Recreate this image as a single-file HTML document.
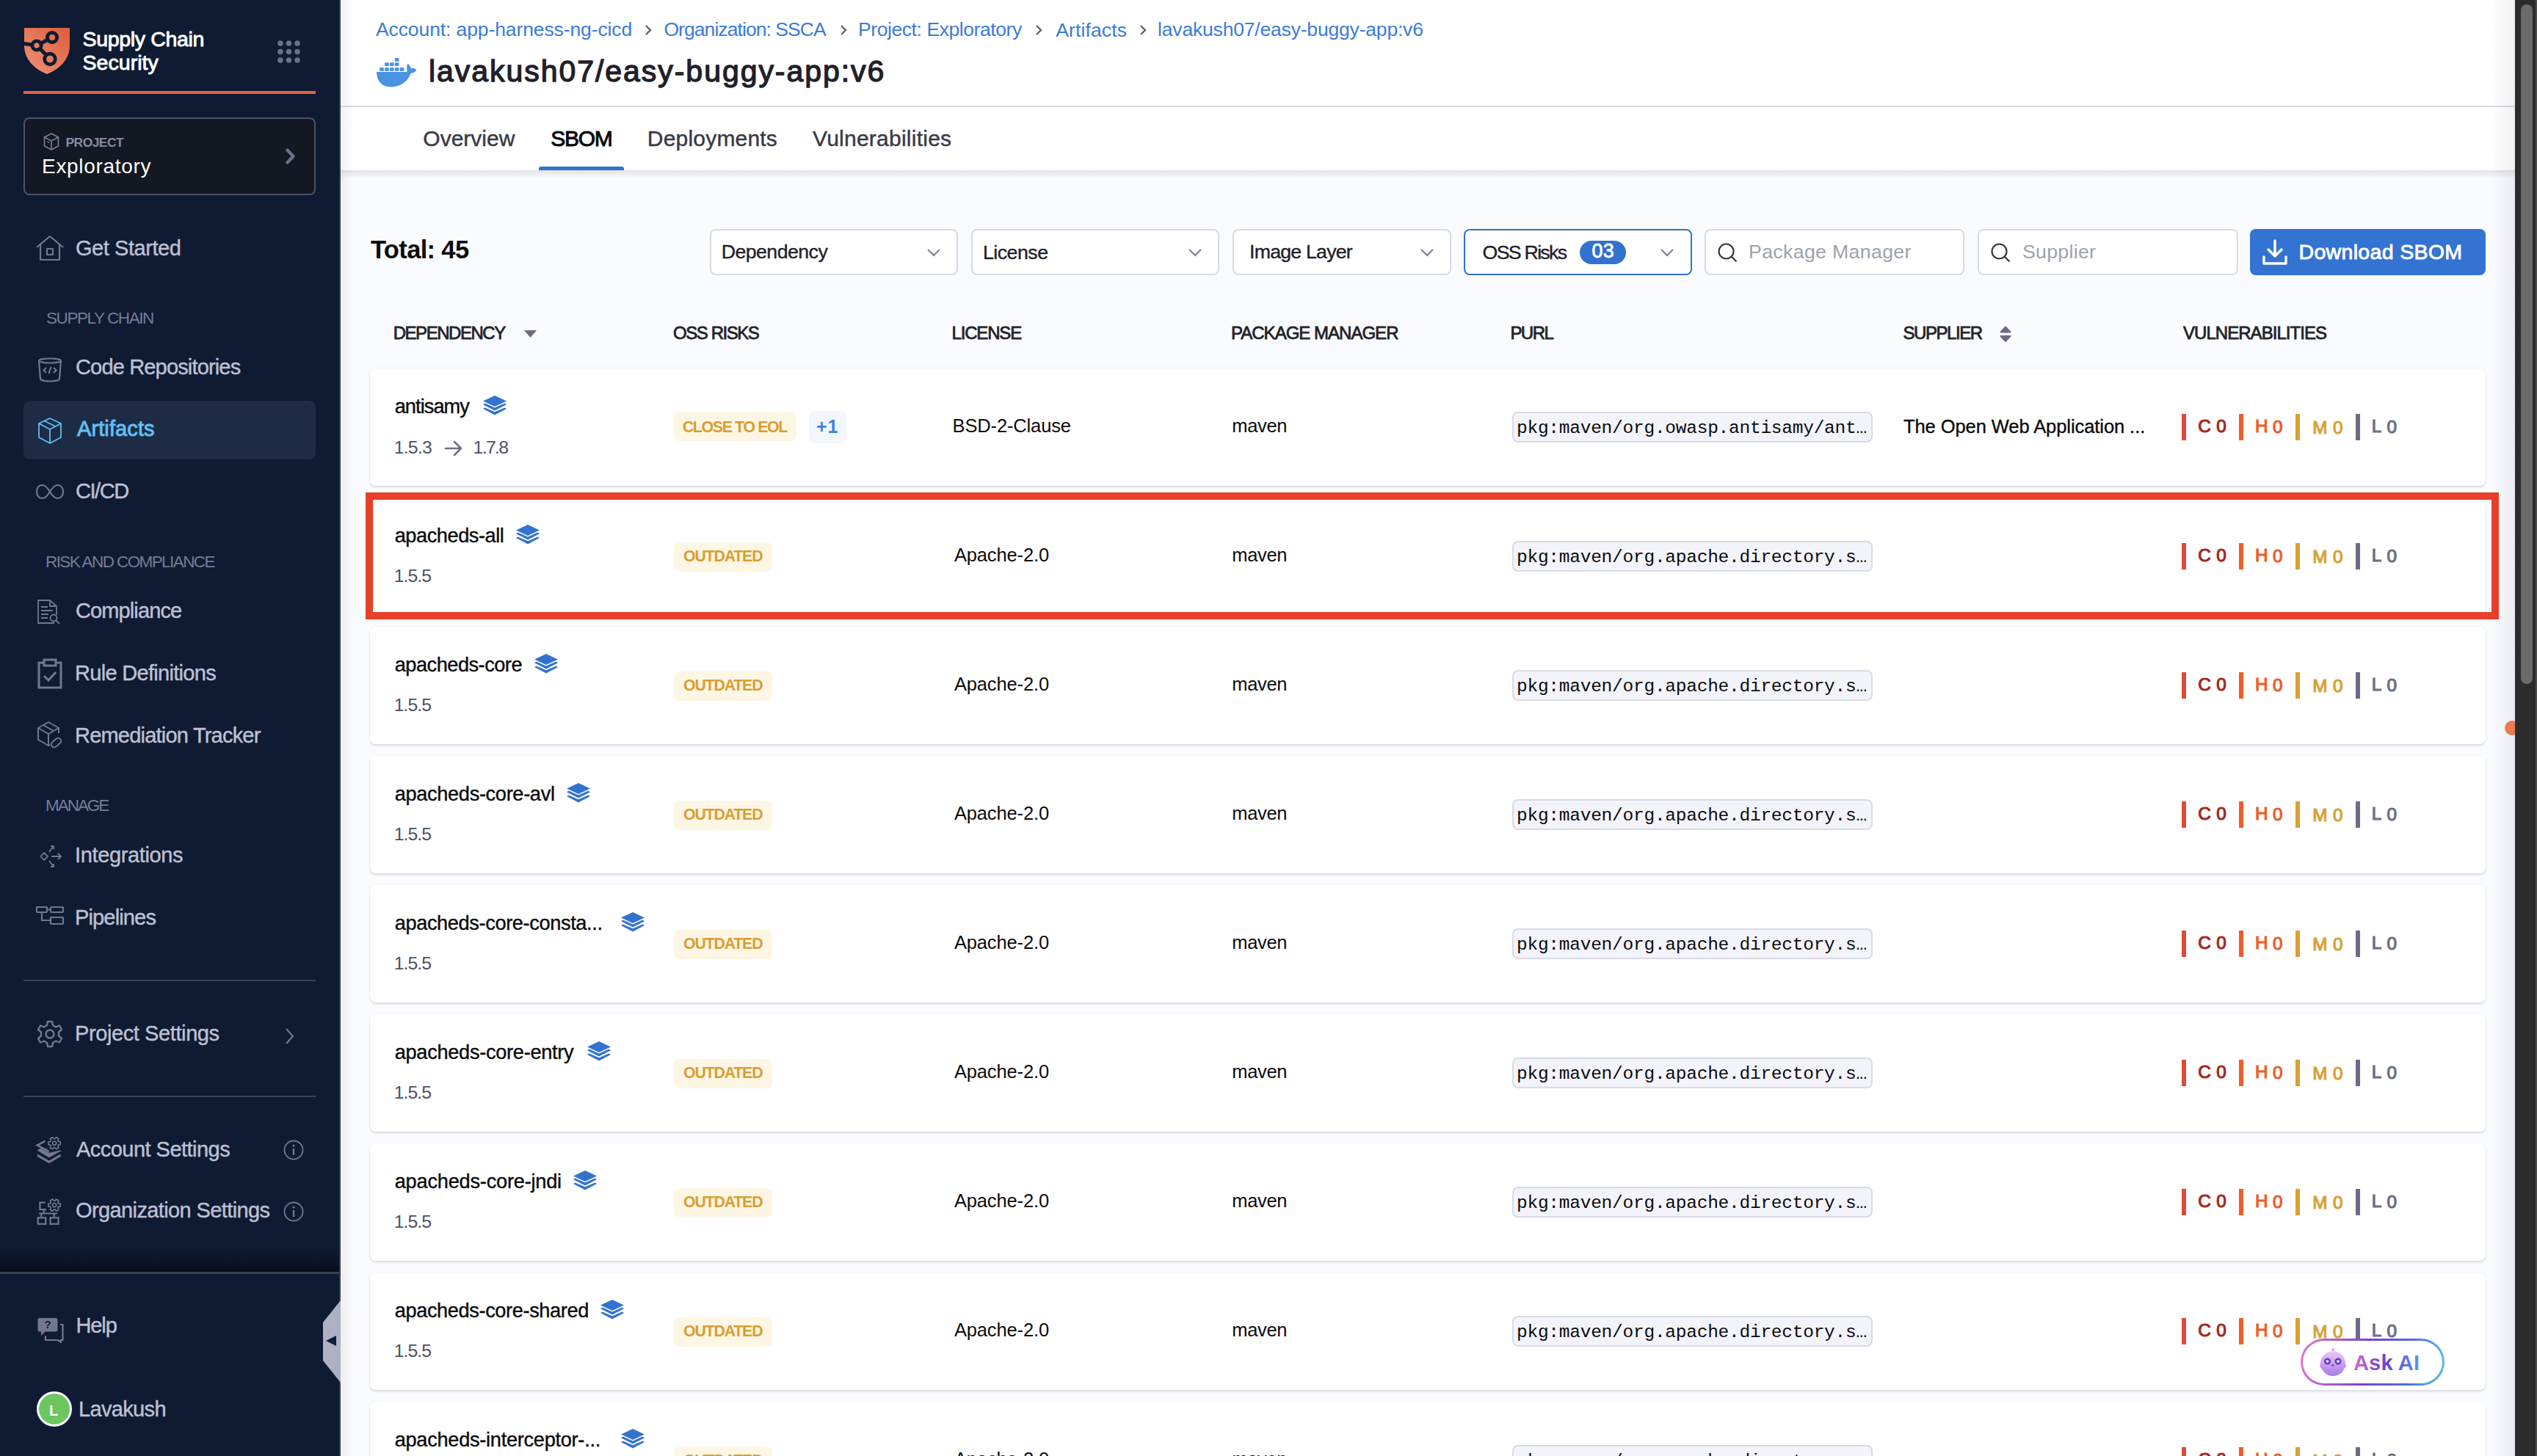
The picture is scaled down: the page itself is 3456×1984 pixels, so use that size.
<!DOCTYPE html><html><head><meta charset="utf-8"><title>SBOM</title><style>
*{box-sizing:border-box;margin:0;padding:0}
html,body{width:3456px;height:1984px;overflow:hidden;background:#fafbfe;font-family:"Liberation Sans",sans-serif;position:relative}
.abs{position:absolute}
.t{position:absolute;white-space:nowrap;line-height:1}
#side{position:absolute;left:0;top:0;width:464px;height:1984px;background:#0e1b33}
.ico{position:absolute}
.dd{position:absolute;top:312px;height:63px;background:#fff;border:2px solid #d9dae6;border-radius:8px}
.card{position:absolute;width:2882px;height:159.5px;background:#fff;border-radius:8px;box-shadow:0 1.5px 3px rgba(20,25,50,.15)}
.purl{position:absolute;width:490.6px;height:42.5px;background:#f3f3fa;border:2px solid #d9dae6;border-radius:8px}
@media (max-width:1800px){html{zoom:.5}}
</style></head><body><div id="side"><svg class="ico" style="left:30px;top:36px" width="70" height="68" viewBox="30 36 70 68">
<defs><linearGradient id="lg" x1="0" y1="1" x2="1" y2="0"><stop offset="0" stop-color="#ec9478"/><stop offset="1" stop-color="#df5c3a"/></linearGradient></defs>
<path d="M33,38 L95,38 L95,62 C95,80 82,94 64,101 C46,94 33,80 33,62 Z" fill="url(#lg)"/>
<g stroke="#0e1b33" stroke-width="5" fill="none"><line x1="30" y1="59" x2="50" y2="62"/><line x1="50" y1="62" x2="71" y2="51"/><line x1="50" y1="62" x2="68" y2="80"/>
<circle cx="71" cy="51" r="6.5"/><circle cx="50" cy="62" r="6"/><circle cx="68" cy="80.5" r="7.2"/></g>
<circle cx="71" cy="51" r="4" fill="#e6714f"/><circle cx="50" cy="62" r="3.6" fill="#e77d5f"/><circle cx="68" cy="80.5" r="4.8" fill="#e47a5c"/>
</svg><div id="s_sc" class="t" style="left:112.50px;top:39.42px;font-size:28.5px;color:#ffffff;font-weight:normal;font-family:'Liberation Sans',sans-serif;-webkit-text-stroke:0.91px #ffffff;letter-spacing:-0.345px">Supply Chain</div><div id="s_sec" class="t" style="left:112.50px;top:70.52px;font-size:28.5px;color:#ffffff;font-weight:normal;font-family:'Liberation Sans',sans-serif;-webkit-text-stroke:0.91px #ffffff;letter-spacing:0.057px">Security</div><svg class="ico" style="left:370px;top:47px" width="50" height="50" viewBox="370 47 50 50"><circle cx="382.0" cy="59.0" r="3.8" fill="#6e7089"/><circle cx="382.0" cy="70.5" r="3.8" fill="#6e7089"/><circle cx="382.0" cy="82.0" r="3.8" fill="#6e7089"/><circle cx="393.5" cy="59.0" r="3.8" fill="#6e7089"/><circle cx="393.5" cy="70.5" r="3.8" fill="#6e7089"/><circle cx="393.5" cy="82.0" r="3.8" fill="#6e7089"/><circle cx="405.0" cy="59.0" r="3.8" fill="#6e7089"/><circle cx="405.0" cy="70.5" r="3.8" fill="#6e7089"/><circle cx="405.0" cy="82.0" r="3.8" fill="#6e7089"/></svg><div class="abs" style="left:32px;top:124px;width:398px;height:4px;background:#e5603f"></div><div class="abs" style="left:32px;top:160px;width:398px;height:106px;background:#141823;border:2px solid #4f5264;border-radius:8px"></div><svg class="ico" style="left:58px;top:180px" width="24" height="26" viewBox="0 0 24 26"><g fill="none" stroke="#7c7f96" stroke-width="1.6" stroke-linejoin="round"><path d="M12,2 L21.5,7 L21.5,19 L12,24 L2.5,19 L2.5,7 Z"/><path d="M2.5,7 L12,12 L21.5,7 M12,12 L12,24"/><path d="M6.5,13 L9,14.3"/></g></svg><div id="s_proj" class="t" style="left:89.50px;top:185.62px;font-size:17.4px;color:#8a8ca6;font-weight:bold;font-family:'Liberation Sans',sans-serif;letter-spacing:-0.500px">PROJECT</div><div id="s_expl" class="t" style="left:57.00px;top:212.74px;font-size:28px;color:#ffffff;font-weight:normal;font-family:'Liberation Sans',sans-serif;letter-spacing:0.700px">Exploratory</div><svg class="ico" style="left:386px;top:200px" width="20" height="26" viewBox="0 0 20 26"><path d="M5.5,4.5 L13.5,13 L5.5,21.5" fill="none" stroke="#6e7089" stroke-width="4.4" stroke-linecap="round" stroke-linejoin="round"/></svg><svg class="ico" style="left:48px;top:320px" width="40" height="36" viewBox="0 0 40 36"><g fill="none" stroke="#74768f" stroke-width="2.2" stroke-linejoin="round"><path d="M2,17 L20,2 L38,17"/><path d="M7,13 L7,34 L33,34 L33,13"/><rect x="16" y="19" width="8" height="8"/></g></svg><div id="m_gs" class="t" style="left:103.00px;top:324.19px;font-size:29px;color:#bfc0d3;font-weight:normal;font-family:'Liberation Sans',sans-serif;-webkit-text-stroke:0.41px #bfc0d3;letter-spacing:-0.440px">Get Started</div><div id="sec1" class="t" style="left:63.00px;top:423.19px;font-size:22.5px;color:#777b93;font-weight:normal;font-family:'Liberation Sans',sans-serif;letter-spacing:-1.418px">SUPPLY CHAIN</div><svg class="ico" style="left:50px;top:487px" width="36" height="34" viewBox="0 0 36 34"><g fill="none" stroke="#74768f" stroke-width="2.2"><ellipse cx="18" cy="4.5" rx="15" ry="3"/><path d="M3,4.5 L5,29 C5,31 11,32.5 18,32.5 C25,32.5 31,31 31,29 L33,4.5"/><path d="M13,14 L9.5,17.5 L13,21 M23,14 L26.5,17.5 L23,21 M19.5,13 L16.5,22"/></g></svg><div id="m_cr" class="t" style="left:103.00px;top:486.19px;font-size:29px;color:#bfc0d3;font-weight:normal;font-family:'Liberation Sans',sans-serif;-webkit-text-stroke:0.41px #bfc0d3;letter-spacing:-0.838px">Code Repositories</div><div class="abs" style="left:32px;top:546px;width:398px;height:80px;background:#1e2b45;border-radius:9px"></div><svg class="ico" style="left:50px;top:568px" width="36" height="38" viewBox="0 0 36 38"><g fill="none" stroke="#5fbff4" stroke-width="1.8" stroke-linejoin="round"><path d="M18,2 L33,9 L33,28 L18,36 L3,28 L3,9 Z"/><path d="M3,9 L18,17 L33,9 M18,17 L18,36"/><path d="M10.5,5.5 L25.5,13"/></g></svg><div id="m_art" class="t" style="left:105.00px;top:569.79px;font-size:29px;color:#5fbff4;font-weight:normal;font-family:'Liberation Sans',sans-serif;-webkit-text-stroke:0.93px #5fbff4;letter-spacing:0.100px">Artifacts</div><svg class="ico" style="left:48px;top:658px" width="40" height="24" viewBox="0 0 40 24"><path d="M20,12 C16,5 12,3 9,3 C5,3 2,7 2,12 C2,17 5,21 9,21 C12,21 16,19 20,12 C24,5 28,3 31,3 C35,3 38,7 38,12 C38,17 35,21 31,21 C28,21 24,19 20,12 Z" fill="none" stroke="#74768f" stroke-width="2.2"/></svg><div id="m_ci" class="t" style="left:103.00px;top:655.00px;font-size:29px;color:#bfc0d3;font-weight:normal;font-family:'Liberation Sans',sans-serif;-webkit-text-stroke:0.41px #bfc0d3;letter-spacing:-1.450px">CI/CD</div><div id="sec2" class="t" style="left:62.00px;top:755.19px;font-size:22.5px;color:#777b93;font-weight:normal;font-family:'Liberation Sans',sans-serif;letter-spacing:-1.589px">RISK AND COMPLIANCE</div><svg class="ico" style="left:50px;top:816px" width="36" height="36" viewBox="0 0 36 36"><g fill="none" stroke="#74768f" stroke-width="1.8"><path d="M24,33 L2,33 L2,2 L18,2 L27,10 L27,22"/><path d="M18,2 L18,10 L27,10"/><path d="M6,11 L15,11 M6,16 L22,16 M6,21 L16,21 M6,26 L15,26"/><circle cx="23" cy="26" r="4.5"/><path d="M26.5,29.5 L31,34"/></g></svg><div id="m_comp" class="t" style="left:103.00px;top:818.29px;font-size:29px;color:#bfc0d3;font-weight:normal;font-family:'Liberation Sans',sans-serif;-webkit-text-stroke:0.41px #bfc0d3;letter-spacing:-0.889px">Compliance</div><svg class="ico" style="left:50px;top:897px" width="36" height="42" viewBox="0 0 36 42"><g fill="none" stroke="#74768f" stroke-width="3"><path d="M10,6 L3,6 L3,40 L33,40 L33,6 L26,6"/><rect x="10" y="2" width="16" height="8"/><path d="M10,24 L16,30 L26,19" stroke-width="3"/></g></svg><div id="m_rule" class="t" style="left:102.00px;top:903.20px;font-size:29px;color:#bfc0d3;font-weight:normal;font-family:'Liberation Sans',sans-serif;-webkit-text-stroke:0.41px #bfc0d3;letter-spacing:-0.693px">Rule Definitions</div><svg class="ico" style="left:50px;top:982px" width="36" height="40" viewBox="0 0 36 40"><g fill="none" stroke="#74768f" stroke-width="2" stroke-linejoin="round"><path d="M30,17 L30,10 L16,2 L2,10 L2,26 L16,34 L18,33"/><path d="M2,10 L16,18 L30,10 M16,18 L16,34 M9,6 L23,14"/><rect x="19" y="26" width="15" height="8" rx="4" transform="rotate(-40 26.5 30)"/></g></svg><div id="m_rem" class="t" style="left:102.00px;top:987.70px;font-size:29px;color:#bfc0d3;font-weight:normal;font-family:'Liberation Sans',sans-serif;-webkit-text-stroke:0.41px #bfc0d3;letter-spacing:-0.789px">Remediation Tracker</div><div id="sec3" class="t" style="left:62.00px;top:1086.69px;font-size:22.5px;color:#777b93;font-weight:normal;font-family:'Liberation Sans',sans-serif;letter-spacing:-2.040px">MANAGE</div><svg class="ico" style="left:50px;top:1150px" width="36" height="34" viewBox="0 0 36 34"><g fill="none" stroke="#74768f" stroke-width="1.8" stroke-linejoin="round"><path d="M5,13 L10,18 L5,23 L0.5,18 Z" transform="translate(5,-1)"/><path d="M20,17 L33,17 M29,13 L33,17 L29,21"/><path d="M17,11 L23,3 M19,3 L23,3 L23,7"/><path d="M17,23 L23,31 M19,31 L23,31 L23,27"/></g></svg><div id="m_int" class="t" style="left:102.00px;top:1151.49px;font-size:29px;color:#bfc0d3;font-weight:normal;font-family:'Liberation Sans',sans-serif;-webkit-text-stroke:0.41px #bfc0d3;letter-spacing:-0.364px">Integrations</div><svg class="ico" style="left:48px;top:1234px" width="40" height="28" viewBox="0 0 40 28"><g fill="none" stroke="#74768f" stroke-width="2.2"><rect x="2" y="2" width="14" height="7" rx="1"/><rect x="21" y="2" width="17" height="7" rx="1"/><rect x="21" y="16" width="17" height="9" rx="1"/><path d="M9,9 L9,20 L21,20 M16,5.5 L21,5.5"/></g></svg><div id="m_pip" class="t" style="left:102.00px;top:1235.99px;font-size:29px;color:#bfc0d3;font-weight:normal;font-family:'Liberation Sans',sans-serif;-webkit-text-stroke:0.41px #bfc0d3;letter-spacing:-0.850px">Pipelines</div><div class="abs" style="left:32px;top:1335px;width:398px;height:2px;background:#3b4256"></div><svg class="ico" style="left:50px;top:1390px" width="36" height="38" viewBox="0 0 36 38"><g fill="none" stroke="#74768f" stroke-width="2.4" stroke-linejoin="round"><path d="M15,2 L21,2 L22,7 L26,9.5 L31,7.5 L34,13 L30,16.5 L30,21.5 L34,25 L31,30.5 L26,28.5 L22,31 L21,36 L15,36 L14,31 L10,28.5 L5,30.5 L2,25 L6,21.5 L6,16.5 L2,13 L5,7.5 L10,9.5 L14,7 Z"/><circle cx="18" cy="19" r="5.5"/></g></svg><div id="m_ps" class="t" style="left:102.00px;top:1393.99px;font-size:29px;color:#bfc0d3;font-weight:normal;font-family:'Liberation Sans',sans-serif;-webkit-text-stroke:0.41px #bfc0d3;letter-spacing:-0.400px">Project Settings</div><svg class="ico" style="left:386px;top:1399px" width="18" height="26" viewBox="0 0 18 26"><path d="M4,3 L13,13 L4,23" fill="none" stroke="#74768f" stroke-width="2.2"/></svg><div class="abs" style="left:32px;top:1493px;width:398px;height:2px;background:#3b4256"></div><svg class="ico" style="left:40px;top:1540px" width="50" height="50" viewBox="0 0 50 50"><path d="M21.5,14.8 L10.8,20.6 L26.9,29" fill="none" stroke="#74768f" stroke-width="2.6"/><path d="M10.6,27.4 L15.4,24.5 L26.9,30.8 L42.8,27.2 L42.8,28.4 L26.9,37.6 Z" fill="#74768f"/><path d="M11,34.2 L26.9,43.4 L42.6,34.2" fill="none" stroke="#74768f" stroke-width="3.2" stroke-linejoin="round"/><path d="M39.64,15.50 L42.27,15.84 L42.27,19.76 L39.64,20.10 L38.86,21.45 L39.88,23.89 L36.49,25.85 L34.88,23.75 L33.32,23.75 L31.71,25.85 L28.32,23.89 L29.34,21.45 L28.56,20.10 L25.93,19.76 L25.93,15.84 L28.56,15.50 L29.34,14.15 L28.32,11.71 L31.71,9.75 L33.32,11.85 L34.88,11.85 L36.49,9.75 L39.88,11.71 L38.86,14.15 Z" fill="none" stroke="#74768f" stroke-width="1.7" stroke-linejoin="round"/><circle cx="34.1" cy="17.8" r="2.6" fill="none" stroke="#74768f" stroke-width="1.6"/></svg><div id="m_as" class="t" style="left:104.00px;top:1552.09px;font-size:29px;color:#bfc0d3;font-weight:normal;font-family:'Liberation Sans',sans-serif;-webkit-text-stroke:0.41px #bfc0d3;letter-spacing:-0.533px">Account Settings</div><svg class="ico" style="left:386px;top:1553px" width="28" height="28" viewBox="0 0 28 28"><g fill="none" stroke="#74768f" stroke-width="1.8"><circle cx="14" cy="14" r="12.5"/><path d="M14,12 L14,21" stroke-width="2.4"/></g><circle cx="14" cy="8" r="1.6" fill="#74768f"/></svg><svg class="ico" style="left:40px;top:1624px" width="50" height="50" viewBox="0 0 50 50"><g fill="none" stroke="#74768f" stroke-width="2.2"><path d="M21.6,14.6 L14.4,14.6 L14.4,24.2 L23,24.2 M19.7,24.2 L19.7,29.5 M13,29.5 L38,29.5 M16.3,29.5 L16.3,34.3 M33.7,29.5 L33.7,34.3"/><rect x="11.7" y="35.4" width="10.6" height="8.4"/><rect x="28.6" y="35.4" width="11" height="8.4"/></g><path d="M39.64,15.80 L42.27,16.14 L42.27,20.06 L39.64,20.40 L38.86,21.75 L39.88,24.19 L36.49,26.15 L34.88,24.05 L33.32,24.05 L31.71,26.15 L28.32,24.19 L29.34,21.75 L28.56,20.40 L25.93,20.06 L25.93,16.14 L28.56,15.80 L29.34,14.45 L28.32,12.01 L31.71,10.05 L33.32,12.15 L34.88,12.15 L36.49,10.05 L39.88,12.01 L38.86,14.45 Z" fill="none" stroke="#74768f" stroke-width="1.7" stroke-linejoin="round"/><circle cx="34.1" cy="18.1" r="2.6" fill="none" stroke="#74768f" stroke-width="1.6"/></svg><div id="m_os" class="t" style="left:103.00px;top:1635.29px;font-size:29px;color:#bfc0d3;font-weight:normal;font-family:'Liberation Sans',sans-serif;-webkit-text-stroke:0.41px #bfc0d3;letter-spacing:-0.610px">Organization Settings</div><svg class="ico" style="left:386px;top:1637px" width="28" height="28" viewBox="0 0 28 28"><g fill="none" stroke="#74768f" stroke-width="1.8"><circle cx="14" cy="14" r="12.5"/><path d="M14,12 L14,21" stroke-width="2.4"/></g><circle cx="14" cy="8" r="1.6" fill="#74768f"/></svg><div class="abs" style="left:0;top:1700px;width:464px;height:33px;background:linear-gradient(to bottom,rgba(0,0,0,0),rgba(0,0,0,.45))"></div><div class="abs" style="left:0;top:1733px;width:464px;height:3px;background:#3a3f50"></div><svg class="ico" style="left:50px;top:1794px" width="40" height="36" viewBox="0 0 40 36"><path d="M4,2 L26,2 C27.5,2 28.5,3 28.5,4.5 L28.5,18 C28.5,19.5 27.5,20.5 26,20.5 L12,20.5 L6,26 L6,20.5 L4,20.5 C2.5,20.5 1.5,19.5 1.5,18 L1.5,4.5 C1.5,3 2.5,2 4,2 Z" fill="#74768f"/><text x="15" y="16" font-size="15" font-weight="bold" fill="#0e1b33" text-anchor="middle" font-family="Liberation Sans">?</text><path d="M32,11 L35.5,11 L35.5,32 L33,32 L33,35 L29,32 L12,32 L12,26" fill="none" stroke="#74768f" stroke-width="2.2"/></svg><div id="m_help" class="t" style="left:103.40px;top:1792.09px;font-size:29px;color:#bfc0d3;font-weight:normal;font-family:'Liberation Sans',sans-serif;-webkit-text-stroke:0.41px #bfc0d3;letter-spacing:-1.067px">Help</div><div class="abs" style="left:50px;top:1896px;width:48px;height:48px;border-radius:50%;background:#6dc65f;border:3px solid #fff"></div><div id="av_l" class="t" style="left:67.00px;top:1912.10px;font-size:20px;color:#ffffff;font-weight:bold;font-family:'Liberation Sans',sans-serif">L</div><div id="m_lav" class="t" style="left:107.00px;top:1905.74px;font-size:29px;color:#bfc0d3;font-weight:normal;font-family:'Liberation Sans',sans-serif;-webkit-text-stroke:0.41px #bfc0d3;letter-spacing:-0.657px">Lavakush</div></div><div class="abs" style="left:464px;top:0;width:2962px;height:144px;background:#fff"></div><div class="abs" style="left:464px;top:144px;width:2962px;height:2px;background:#d9dae6"></div><div class="abs" style="left:464px;top:146px;width:2962px;height:86px;background:#fff"></div><div class="abs" style="left:464px;top:232px;width:2962px;height:11px;background:linear-gradient(to bottom,rgba(30,32,60,.11),rgba(30,32,60,0))"></div><div id="bc1" class="t" style="left:512.00px;top:27.41px;font-size:26.5px;color:#3b7bd8;font-weight:normal;font-family:'Liberation Sans',sans-serif;letter-spacing:-0.104px">Account: app-harness-ng-cicd</div><div id="bc2" class="t" style="left:904.40px;top:27.41px;font-size:26.5px;color:#3b7bd8;font-weight:normal;font-family:'Liberation Sans',sans-serif;letter-spacing:-0.929px">Organization: SSCA</div><div id="bc3" class="t" style="left:1169.00px;top:27.41px;font-size:26.5px;color:#3b7bd8;font-weight:normal;font-family:'Liberation Sans',sans-serif;letter-spacing:-0.421px">Project: Exploratory</div><div id="bc4" class="t" style="left:1438.20px;top:27.69px;font-size:26.5px;color:#3b7bd8;font-weight:normal;font-family:'Liberation Sans',sans-serif;letter-spacing:0.125px">Artifacts</div><div id="bc5" class="t" style="left:1577.10px;top:27.41px;font-size:26.5px;color:#3b7bd8;font-weight:normal;font-family:'Liberation Sans',sans-serif;letter-spacing:-0.185px">lavakush07/easy-buggy-app:v6</div><svg class="abs" style="left:875.6px;top:31px" width="14" height="20" viewBox="0 0 14 20"><path d="M4,4 L10,10 L4,16" fill="none" stroke="#5f6270" stroke-width="2.4"/></svg><svg class="abs" style="left:1141.6px;top:31px" width="14" height="20" viewBox="0 0 14 20"><path d="M4,4 L10,10 L4,16" fill="none" stroke="#5f6270" stroke-width="2.4"/></svg><svg class="abs" style="left:1408px;top:31px" width="14" height="20" viewBox="0 0 14 20"><path d="M4,4 L10,10 L4,16" fill="none" stroke="#5f6270" stroke-width="2.4"/></svg><svg class="abs" style="left:1549.5px;top:31px" width="14" height="20" viewBox="0 0 14 20"><path d="M4,4 L10,10 L4,16" fill="none" stroke="#5f6270" stroke-width="2.4"/></svg><svg class="abs" style="left:500px;top:70px" width="80" height="55" viewBox="0 0 80 55"><g fill="#4a93e3"><rect x="17.2" y="22.1" width="5.6" height="4.8"/><rect x="24.1" y="22.1" width="5.6" height="4.8"/><rect x="31" y="22.1" width="5.6" height="4.8"/><rect x="37.9" y="22.1" width="5.6" height="4.8"/><rect x="44.8" y="22.1" width="5.6" height="4.8"/><rect x="24.1" y="15.3" width="5.6" height="4.8"/><rect x="31" y="15.3" width="5.6" height="4.8"/><rect x="37.9" y="15.3" width="5.6" height="4.8"/><rect x="37.9" y="9" width="5.6" height="4.8"/><path d="M13,28 L54.5,28 C54.5,25 53.5,21 55.3,16.6 C57.5,18.5 59.5,21 60,23.2 C63,22.8 65.5,23.5 67.2,24.8 C66,28.2 63,30 59.5,30 C55,42 45,48.5 32,48.5 C20,48.5 13,40 13,28 Z"/></g></svg><div id="title" class="t" style="left:584.00px;top:77.36px;font-size:41px;color:#1f2029;font-weight:normal;font-family:'Liberation Sans',sans-serif;-webkit-text-stroke:1.31px #1f2029;letter-spacing:1.956px">lavakush07/easy-buggy-app:v6</div><div id="tab1" class="t" style="left:576.30px;top:174.23px;font-size:30px;color:#383946;font-weight:normal;font-family:'Liberation Sans',sans-serif;-webkit-text-stroke:0.42px #383946">Overview</div><div id="tab2" class="t" style="left:750.20px;top:173.53px;font-size:30px;color:#0b0b0d;font-weight:normal;font-family:'Liberation Sans',sans-serif;-webkit-text-stroke:0.96px #0b0b0d;letter-spacing:-1.267px">SBOM</div><div id="tab3" class="t" style="left:881.80px;top:173.95px;font-size:30px;color:#383946;font-weight:normal;font-family:'Liberation Sans',sans-serif;-webkit-text-stroke:0.42px #383946;letter-spacing:0.200px">Deployments</div><div id="tab4" class="t" style="left:1107.00px;top:174.23px;font-size:30px;color:#383946;font-weight:normal;font-family:'Liberation Sans',sans-serif;-webkit-text-stroke:0.42px #383946;letter-spacing:0.243px">Vulnerabilities</div><div class="abs" style="left:734px;top:227px;width:116px;height:5px;background:#3171d0;border-radius:3px 3px 0 0"></div><div id="total" class="t" style="left:505.00px;top:322.97px;font-size:34.5px;color:#0b0b0d;font-weight:bold;font-family:'Liberation Sans',sans-serif;letter-spacing:-0.650px">Total: 45</div><div class="dd" style="left:967px;width:338px"></div><div id="dd1" class="t" style="left:982.70px;top:329.84px;font-size:26.7px;color:#1f2029;font-weight:normal;font-family:'Liberation Sans',sans-serif;-webkit-text-stroke:0.37px #1f2029;letter-spacing:-0.533px">Dependency</div><svg class="abs" style="left:1261px;top:335px" width="22" height="18" viewBox="0 0 22 18"><path d="M3,5 L11,13 L19,5" fill="none" stroke="#7b7d96" stroke-width="2"/></svg><div class="dd" style="left:1322.5px;width:338.5px"></div><div id="dd2" class="t" style="left:1339.00px;top:330.68px;font-size:26.7px;color:#1f2029;font-weight:normal;font-family:'Liberation Sans',sans-serif;-webkit-text-stroke:0.37px #1f2029;letter-spacing:-0.500px">License</div><svg class="abs" style="left:1617px;top:335px" width="22" height="18" viewBox="0 0 22 18"><path d="M3,5 L11,13 L19,5" fill="none" stroke="#7b7d96" stroke-width="2"/></svg><div class="dd" style="left:1679px;width:298px"></div><div id="dd3" class="t" style="left:1702.10px;top:329.84px;font-size:26.7px;color:#1f2029;font-weight:normal;font-family:'Liberation Sans',sans-serif;-webkit-text-stroke:0.37px #1f2029;letter-spacing:-0.780px">Image Layer</div><svg class="abs" style="left:1933px;top:335px" width="22" height="18" viewBox="0 0 22 18"><path d="M3,5 L11,13 L19,5" fill="none" stroke="#7b7d96" stroke-width="2"/></svg><div class="dd" style="left:1994px;width:310.5px;border-color:#3171d0"></div><div id="dd4" class="t" style="left:2019.60px;top:330.68px;font-size:26.7px;color:#1f2029;font-weight:normal;font-family:'Liberation Sans',sans-serif;-webkit-text-stroke:0.37px #1f2029;letter-spacing:-1.700px">OSS Risks</div><div class="abs" style="left:2152px;top:328px;width:63px;height:32px;border-radius:16px;background:#3171d0"></div><div id="badge03" class="t" style="left:2168.40px;top:329.23px;font-size:26.8px;color:#ffffff;font-weight:normal;font-family:'Liberation Sans',sans-serif;-webkit-text-stroke:0.86px #ffffff;letter-spacing:0.500px">03</div><svg class="abs" style="left:2260px;top:335px" width="22" height="18" viewBox="0 0 22 18"><path d="M3,5 L11,13 L19,5" fill="none" stroke="#7b7d96" stroke-width="2"/></svg><div class="dd" style="left:2322px;width:354px"></div><svg class="abs" style="left:2339px;top:330px" width="30" height="30" viewBox="0 0 30 30"><g fill="none" stroke="#383946" stroke-width="2.2"><circle cx="12.5" cy="12.5" r="10"/><path d="M20,20 L26.5,26.5"/></g></svg><div id="srch1" class="t" style="left:2382.00px;top:329.84px;font-size:26.7px;color:#9ca2ad;font-weight:normal;font-family:'Liberation Sans',sans-serif;letter-spacing:0.343px">Package Manager</div><div class="dd" style="left:2694px;width:354.5px"></div><svg class="abs" style="left:2711px;top:330px" width="30" height="30" viewBox="0 0 30 30"><g fill="none" stroke="#383946" stroke-width="2.2"><circle cx="12.5" cy="12.5" r="10"/><path d="M20,20 L26.5,26.5"/></g></svg><div id="srch2" class="t" style="left:2755.00px;top:329.84px;font-size:26.7px;color:#9ca2ad;font-weight:normal;font-family:'Liberation Sans',sans-serif;letter-spacing:0.286px">Supplier</div><div class="abs" style="left:3065px;top:312px;width:321px;height:63px;background:#3373d1;border-radius:8px"></div><svg class="abs" style="left:3082px;top:326px" width="34" height="36" viewBox="0 0 34 36"><g fill="none" stroke="#fff" stroke-width="3.4" stroke-linecap="round" stroke-linejoin="round"><path d="M17,2 L17,22 M8,14 L17,23 L26,14"/><path d="M2,24 L2,33 L32,33 L32,24"/></g></svg><div id="dl" class="t" style="left:3131.50px;top:329.22px;font-size:28.5px;color:#ffffff;font-weight:normal;font-family:'Liberation Sans',sans-serif;-webkit-text-stroke:0.91px #ffffff;letter-spacing:0.333px">Download SBOM</div><div id="th0" class="t" style="left:535.70px;top:442.02px;font-size:24px;color:#22222a;font-weight:normal;font-family:'Liberation Sans',sans-serif;-webkit-text-stroke:0.77px #22222a;letter-spacing:-1.467px">DEPENDENCY</div><div id="th1" class="t" style="left:917.10px;top:442.02px;font-size:24px;color:#22222a;font-weight:normal;font-family:'Liberation Sans',sans-serif;-webkit-text-stroke:0.77px #22222a;letter-spacing:-1.450px">OSS RISKS</div><div id="th2" class="t" style="left:1296.50px;top:442.02px;font-size:24px;color:#22222a;font-weight:normal;font-family:'Liberation Sans',sans-serif;-webkit-text-stroke:0.77px #22222a;letter-spacing:-1.167px">LICENSE</div><div id="th3" class="t" style="left:1677.00px;top:442.02px;font-size:24px;color:#22222a;font-weight:normal;font-family:'Liberation Sans',sans-serif;-webkit-text-stroke:0.77px #22222a;letter-spacing:-0.986px">PACKAGE MANAGER</div><div id="th4" class="t" style="left:2057.40px;top:442.02px;font-size:24px;color:#22222a;font-weight:normal;font-family:'Liberation Sans',sans-serif;-webkit-text-stroke:0.77px #22222a;letter-spacing:-1.533px">PURL</div><div id="th5" class="t" style="left:2592.50px;top:442.02px;font-size:24px;color:#22222a;font-weight:normal;font-family:'Liberation Sans',sans-serif;-webkit-text-stroke:0.77px #22222a;letter-spacing:-1.457px">SUPPLIER</div><div id="th6" class="t" style="left:2974.00px;top:442.02px;font-size:24px;color:#22222a;font-weight:normal;font-family:'Liberation Sans',sans-serif;-webkit-text-stroke:0.77px #22222a;letter-spacing:-0.957px">VULNERABILITIES</div><svg class="abs" style="left:714px;top:450px" width="17" height="11" viewBox="0 0 17 11"><path d="M0,0 L17,0 L8.5,10 Z" fill="#6b6d85"/></svg><svg class="abs" style="left:2722.5px;top:442.5px" width="18" height="26" viewBox="0 0 18 26"><path d="M9,2.5 L15.5,9.5 L2.5,9.5 Z M2.5,15 L15.5,15 L9,22 Z" fill="#6b6d85" stroke="#6b6d85" stroke-width="2" stroke-linejoin="round"/></svg><div class="card" style="left:504px;top:502px"></div><div id="nm0" class="t" style="left:537.70px;top:539.62px;font-size:27.2px;color:#0b0b0d;font-weight:normal;font-family:'Liberation Sans',sans-serif;-webkit-text-stroke:0.38px #0b0b0d;letter-spacing:-0.943px">antisamy</div><svg class="abs" style="left:657.8px;top:538.7px" width="32" height="27" viewBox="0 0 32 27"><path d="M16,0 L32,7.6 L16,15.1 L0,7.6 Z M0,12.2 L2.6,10.6 L16,16.6 L29.4,10.6 L32,12.2 L16,20.6 Z M0,18.0 L2.6,16.4 L16,22.2 L29.4,16.4 L32,18.0 L16,26.4 Z" fill="#3373d0"/></svg><div id="v153" class="t" style="left:536.70px;top:598.32px;font-size:24.8px;color:#4f5162;font-weight:normal;font-family:'Liberation Sans',sans-serif;letter-spacing:-0.750px">1.5.3</div><svg class="abs" style="left:604px;top:599px" width="28" height="24" viewBox="0 0 28 24"><g fill="none" stroke="#6b6d85" stroke-width="2.6" stroke-linecap="round" stroke-linejoin="round"><path d="M3,12 L24,12 M15,3 L24,12 L15,21"/></g></svg><div id="v178" class="t" style="left:644.50px;top:598.32px;font-size:24.8px;color:#4f5162;font-weight:normal;font-family:'Liberation Sans',sans-serif;letter-spacing:-1.650px">1.7.8</div><div class="abs" style="left:918px;top:561px;width:167.4px;height:39.6px;background:#fdf6e4;border-radius:8px"></div><div id="eol" class="t" style="left:929.80px;top:571.74px;font-size:21.3px;color:#d99e32;font-weight:bold;font-family:'Liberation Sans',sans-serif;letter-spacing:-1.327px">CLOSE TO EOL</div><div class="abs" style="left:1102px;top:560px;width:51px;height:44px;background:#f3f6fb;border-radius:8px"></div><div id="plus1" class="t" style="left:1112.00px;top:568.88px;font-size:25px;color:#3b82e0;font-weight:bold;font-family:'Liberation Sans',sans-serif;letter-spacing:1.000px">+1</div><div id="bsd" class="t" style="left:1297.60px;top:568.49px;font-size:25.5px;color:#0b0b0d;font-weight:normal;font-family:'Liberation Sans',sans-serif;letter-spacing:-0.145px">BSD-2-Clause</div><div id="pm0" class="t" style="left:1678.30px;top:568.49px;font-size:25.5px;color:#0b0b0d;font-weight:normal;font-family:'Liberation Sans',sans-serif;letter-spacing:-0.350px">maven</div><div class="purl" style="left:2060px;top:560.7px"></div><div id="purl0" class="t" style="left:2066.00px;top:572.06px;font-size:24.5px;color:#0b0b0d;font-weight:normal;font-family:'Liberation Mono',monospace;letter-spacing:-0.250px">pkg:maven/org.owasp.antisamy/ant…</div><div id="sup0" class="t" style="left:2593.00px;top:569.25px;font-size:25.5px;color:#0b0b0d;font-weight:normal;font-family:'Liberation Sans',sans-serif;-webkit-text-stroke:0.36px #0b0b0d;letter-spacing:-0.074px">The Open Web Application ...</div><div class="abs" style="left:2972px;top:564px;width:6px;height:35.7px;background:#dc4a3a"></div><div id="vC0" class="t" style="left:2994.30px;top:569.23px;font-size:24.3px;color:#a2281d;font-weight:normal;font-family:'Liberation Sans',sans-serif;-webkit-text-stroke:1.09px #a2281d">C</div><div id="vC00" class="t" style="left:3019.30px;top:569.23px;font-size:24.3px;color:#a2281d;font-weight:normal;font-family:'Liberation Sans',sans-serif;-webkit-text-stroke:1.09px #a2281d">0</div><div class="abs" style="left:3050px;top:564px;width:6px;height:35.7px;background:#ec5f2c"></div><div id="vH0" class="t" style="left:3072.10px;top:569.23px;font-size:24.3px;color:#e8602c;font-weight:normal;font-family:'Liberation Sans',sans-serif;-webkit-text-stroke:1.09px #e8602c">H</div><div id="vH00" class="t" style="left:3096.00px;top:569.93px;font-size:24.3px;color:#e8602c;font-weight:normal;font-family:'Liberation Sans',sans-serif;-webkit-text-stroke:1.09px #e8602c">0</div><div class="abs" style="left:3127.1px;top:564px;width:6px;height:35.7px;background:#daa033"></div><div id="vM0" class="t" style="left:3150.20px;top:570.63px;font-size:24.3px;color:#d9a032;font-weight:normal;font-family:'Liberation Sans',sans-serif;-webkit-text-stroke:1.09px #d9a032">M</div><div id="vM00" class="t" style="left:3178.00px;top:570.63px;font-size:24.3px;color:#d9a032;font-weight:normal;font-family:'Liberation Sans',sans-serif;-webkit-text-stroke:1.09px #d9a032">0</div><div class="abs" style="left:3209.1px;top:564px;width:6px;height:35.7px;background:#6b6d85"></div><div id="vL0" class="t" style="left:3230.80px;top:569.23px;font-size:24.3px;color:#6b6d85;font-weight:normal;font-family:'Liberation Sans',sans-serif;-webkit-text-stroke:1.09px #6b6d85">L</div><div id="vL00" class="t" style="left:3251.40px;top:569.93px;font-size:24.3px;color:#6b6d85;font-weight:normal;font-family:'Liberation Sans',sans-serif;-webkit-text-stroke:1.09px #6b6d85">0</div><div class="card" style="left:504px;top:678px"></div><div id="nm1" class="t" style="left:537.70px;top:715.62px;font-size:27.2px;color:#0b0b0d;font-weight:normal;font-family:'Liberation Sans',sans-serif;-webkit-text-stroke:0.38px #0b0b0d;letter-spacing:-0.455px">apacheds-all</div><svg class="abs" style="left:702.8px;top:714.7px" width="32" height="27" viewBox="0 0 32 27"><path d="M16,0 L32,7.6 L16,15.1 L0,7.6 Z M0,12.2 L2.6,10.6 L16,16.6 L29.4,10.6 L32,12.2 L16,20.6 Z M0,18.0 L2.6,16.4 L16,22.2 L29.4,16.4 L32,18.0 L16,26.4 Z" fill="#3373d0"/></svg><div id="ver1" class="t" style="left:536.70px;top:773.28px;font-size:24.8px;color:#4f5162;font-weight:normal;font-family:'Liberation Sans',sans-serif;letter-spacing:-0.950px">1.5.5</div><div class="abs" style="left:918px;top:739.1px;width:133.7px;height:39.6px;background:#fdf6e4;border-radius:8px"></div><div id="out1" class="t" style="left:931.00px;top:747.74px;font-size:21.3px;color:#d99e32;font-weight:bold;font-family:'Liberation Sans',sans-serif;letter-spacing:-1.171px">OUTDATED</div><div id="lic1" class="t" style="left:1299.90px;top:744.35px;font-size:25.5px;color:#0b0b0d;font-weight:normal;font-family:'Liberation Sans',sans-serif;letter-spacing:-0.133px">Apache-2.0</div><div id="pm1" class="t" style="left:1678.30px;top:744.49px;font-size:25.5px;color:#0b0b0d;font-weight:normal;font-family:'Liberation Sans',sans-serif;letter-spacing:-0.350px">maven</div><div class="purl" style="left:2060px;top:736.7px"></div><div id="purl1" class="t" style="left:2066.00px;top:748.06px;font-size:24.5px;color:#0b0b0d;font-weight:normal;font-family:'Liberation Mono',monospace;letter-spacing:-0.250px">pkg:maven/org.apache.directory.s…</div><div class="abs" style="left:2972px;top:740px;width:6px;height:35.7px;background:#dc4a3a"></div><div id="vC1" class="t" style="left:2994.30px;top:745.23px;font-size:24.3px;color:#a2281d;font-weight:normal;font-family:'Liberation Sans',sans-serif;-webkit-text-stroke:1.09px #a2281d">C</div><div id="vC01" class="t" style="left:3019.30px;top:745.23px;font-size:24.3px;color:#a2281d;font-weight:normal;font-family:'Liberation Sans',sans-serif;-webkit-text-stroke:1.09px #a2281d">0</div><div class="abs" style="left:3050px;top:740px;width:6px;height:35.7px;background:#ec5f2c"></div><div id="vH1" class="t" style="left:3072.10px;top:745.23px;font-size:24.3px;color:#e8602c;font-weight:normal;font-family:'Liberation Sans',sans-serif;-webkit-text-stroke:1.09px #e8602c">H</div><div id="vH01" class="t" style="left:3096.00px;top:745.93px;font-size:24.3px;color:#e8602c;font-weight:normal;font-family:'Liberation Sans',sans-serif;-webkit-text-stroke:1.09px #e8602c">0</div><div class="abs" style="left:3127.1px;top:740px;width:6px;height:35.7px;background:#daa033"></div><div id="vM1" class="t" style="left:3150.20px;top:746.63px;font-size:24.3px;color:#d9a032;font-weight:normal;font-family:'Liberation Sans',sans-serif;-webkit-text-stroke:1.09px #d9a032">M</div><div id="vM01" class="t" style="left:3178.00px;top:746.63px;font-size:24.3px;color:#d9a032;font-weight:normal;font-family:'Liberation Sans',sans-serif;-webkit-text-stroke:1.09px #d9a032">0</div><div class="abs" style="left:3209.1px;top:740px;width:6px;height:35.7px;background:#6b6d85"></div><div id="vL1" class="t" style="left:3230.80px;top:745.23px;font-size:24.3px;color:#6b6d85;font-weight:normal;font-family:'Liberation Sans',sans-serif;-webkit-text-stroke:1.09px #6b6d85">L</div><div id="vL01" class="t" style="left:3251.40px;top:745.93px;font-size:24.3px;color:#6b6d85;font-weight:normal;font-family:'Liberation Sans',sans-serif;-webkit-text-stroke:1.09px #6b6d85">0</div><div class="card" style="left:504px;top:854px"></div><div id="nm2" class="t" style="left:537.70px;top:891.62px;font-size:27.2px;color:#0b0b0d;font-weight:normal;font-family:'Liberation Sans',sans-serif;-webkit-text-stroke:0.38px #0b0b0d;letter-spacing:-0.500px">apacheds-core</div><svg class="abs" style="left:727.7px;top:890.7px" width="32" height="27" viewBox="0 0 32 27"><path d="M16,0 L32,7.6 L16,15.1 L0,7.6 Z M0,12.2 L2.6,10.6 L16,16.6 L29.4,10.6 L32,12.2 L16,20.6 Z M0,18.0 L2.6,16.4 L16,22.2 L29.4,16.4 L32,18.0 L16,26.4 Z" fill="#3373d0"/></svg><div id="ver2" class="t" style="left:536.70px;top:949.28px;font-size:24.8px;color:#4f5162;font-weight:normal;font-family:'Liberation Sans',sans-serif;letter-spacing:-0.950px">1.5.5</div><div class="abs" style="left:918px;top:915.1px;width:133.7px;height:39.6px;background:#fdf6e4;border-radius:8px"></div><div id="out2" class="t" style="left:931.00px;top:923.74px;font-size:21.3px;color:#d99e32;font-weight:bold;font-family:'Liberation Sans',sans-serif;letter-spacing:-1.171px">OUTDATED</div><div id="lic2" class="t" style="left:1299.90px;top:920.35px;font-size:25.5px;color:#0b0b0d;font-weight:normal;font-family:'Liberation Sans',sans-serif;letter-spacing:-0.133px">Apache-2.0</div><div id="pm2" class="t" style="left:1678.30px;top:920.49px;font-size:25.5px;color:#0b0b0d;font-weight:normal;font-family:'Liberation Sans',sans-serif;letter-spacing:-0.350px">maven</div><div class="purl" style="left:2060px;top:912.7px"></div><div id="purl2" class="t" style="left:2066.00px;top:924.06px;font-size:24.5px;color:#0b0b0d;font-weight:normal;font-family:'Liberation Mono',monospace;letter-spacing:-0.250px">pkg:maven/org.apache.directory.s…</div><div class="abs" style="left:2972px;top:916px;width:6px;height:35.7px;background:#dc4a3a"></div><div id="vC2" class="t" style="left:2994.30px;top:921.23px;font-size:24.3px;color:#a2281d;font-weight:normal;font-family:'Liberation Sans',sans-serif;-webkit-text-stroke:1.09px #a2281d">C</div><div id="vC02" class="t" style="left:3019.30px;top:921.23px;font-size:24.3px;color:#a2281d;font-weight:normal;font-family:'Liberation Sans',sans-serif;-webkit-text-stroke:1.09px #a2281d">0</div><div class="abs" style="left:3050px;top:916px;width:6px;height:35.7px;background:#ec5f2c"></div><div id="vH2" class="t" style="left:3072.10px;top:921.23px;font-size:24.3px;color:#e8602c;font-weight:normal;font-family:'Liberation Sans',sans-serif;-webkit-text-stroke:1.09px #e8602c">H</div><div id="vH02" class="t" style="left:3096.00px;top:921.93px;font-size:24.3px;color:#e8602c;font-weight:normal;font-family:'Liberation Sans',sans-serif;-webkit-text-stroke:1.09px #e8602c">0</div><div class="abs" style="left:3127.1px;top:916px;width:6px;height:35.7px;background:#daa033"></div><div id="vM2" class="t" style="left:3150.20px;top:922.63px;font-size:24.3px;color:#d9a032;font-weight:normal;font-family:'Liberation Sans',sans-serif;-webkit-text-stroke:1.09px #d9a032">M</div><div id="vM02" class="t" style="left:3178.00px;top:922.63px;font-size:24.3px;color:#d9a032;font-weight:normal;font-family:'Liberation Sans',sans-serif;-webkit-text-stroke:1.09px #d9a032">0</div><div class="abs" style="left:3209.1px;top:916px;width:6px;height:35.7px;background:#6b6d85"></div><div id="vL2" class="t" style="left:3230.80px;top:921.23px;font-size:24.3px;color:#6b6d85;font-weight:normal;font-family:'Liberation Sans',sans-serif;-webkit-text-stroke:1.09px #6b6d85">L</div><div id="vL02" class="t" style="left:3251.40px;top:921.93px;font-size:24.3px;color:#6b6d85;font-weight:normal;font-family:'Liberation Sans',sans-serif;-webkit-text-stroke:1.09px #6b6d85">0</div><div class="card" style="left:504px;top:1030px"></div><div id="nm3" class="t" style="left:537.70px;top:1067.62px;font-size:27.2px;color:#0b0b0d;font-weight:normal;font-family:'Liberation Sans',sans-serif;-webkit-text-stroke:0.38px #0b0b0d;letter-spacing:-0.337px">apacheds-core-avl</div><svg class="abs" style="left:771.9px;top:1066.7px" width="32" height="27" viewBox="0 0 32 27"><path d="M16,0 L32,7.6 L16,15.1 L0,7.6 Z M0,12.2 L2.6,10.6 L16,16.6 L29.4,10.6 L32,12.2 L16,20.6 Z M0,18.0 L2.6,16.4 L16,22.2 L29.4,16.4 L32,18.0 L16,26.4 Z" fill="#3373d0"/></svg><div id="ver3" class="t" style="left:536.70px;top:1125.28px;font-size:24.8px;color:#4f5162;font-weight:normal;font-family:'Liberation Sans',sans-serif;letter-spacing:-0.950px">1.5.5</div><div class="abs" style="left:918px;top:1091.1px;width:133.7px;height:39.6px;background:#fdf6e4;border-radius:8px"></div><div id="out3" class="t" style="left:931.00px;top:1099.74px;font-size:21.3px;color:#d99e32;font-weight:bold;font-family:'Liberation Sans',sans-serif;letter-spacing:-1.171px">OUTDATED</div><div id="lic3" class="t" style="left:1299.90px;top:1096.35px;font-size:25.5px;color:#0b0b0d;font-weight:normal;font-family:'Liberation Sans',sans-serif;letter-spacing:-0.133px">Apache-2.0</div><div id="pm3" class="t" style="left:1678.30px;top:1096.49px;font-size:25.5px;color:#0b0b0d;font-weight:normal;font-family:'Liberation Sans',sans-serif;letter-spacing:-0.350px">maven</div><div class="purl" style="left:2060px;top:1088.7px"></div><div id="purl3" class="t" style="left:2066.00px;top:1100.06px;font-size:24.5px;color:#0b0b0d;font-weight:normal;font-family:'Liberation Mono',monospace;letter-spacing:-0.250px">pkg:maven/org.apache.directory.s…</div><div class="abs" style="left:2972px;top:1092px;width:6px;height:35.7px;background:#dc4a3a"></div><div id="vC3" class="t" style="left:2994.30px;top:1097.23px;font-size:24.3px;color:#a2281d;font-weight:normal;font-family:'Liberation Sans',sans-serif;-webkit-text-stroke:1.09px #a2281d">C</div><div id="vC03" class="t" style="left:3019.30px;top:1097.23px;font-size:24.3px;color:#a2281d;font-weight:normal;font-family:'Liberation Sans',sans-serif;-webkit-text-stroke:1.09px #a2281d">0</div><div class="abs" style="left:3050px;top:1092px;width:6px;height:35.7px;background:#ec5f2c"></div><div id="vH3" class="t" style="left:3072.10px;top:1097.23px;font-size:24.3px;color:#e8602c;font-weight:normal;font-family:'Liberation Sans',sans-serif;-webkit-text-stroke:1.09px #e8602c">H</div><div id="vH03" class="t" style="left:3096.00px;top:1097.93px;font-size:24.3px;color:#e8602c;font-weight:normal;font-family:'Liberation Sans',sans-serif;-webkit-text-stroke:1.09px #e8602c">0</div><div class="abs" style="left:3127.1px;top:1092px;width:6px;height:35.7px;background:#daa033"></div><div id="vM3" class="t" style="left:3150.20px;top:1098.63px;font-size:24.3px;color:#d9a032;font-weight:normal;font-family:'Liberation Sans',sans-serif;-webkit-text-stroke:1.09px #d9a032">M</div><div id="vM03" class="t" style="left:3178.00px;top:1098.63px;font-size:24.3px;color:#d9a032;font-weight:normal;font-family:'Liberation Sans',sans-serif;-webkit-text-stroke:1.09px #d9a032">0</div><div class="abs" style="left:3209.1px;top:1092px;width:6px;height:35.7px;background:#6b6d85"></div><div id="vL3" class="t" style="left:3230.80px;top:1097.23px;font-size:24.3px;color:#6b6d85;font-weight:normal;font-family:'Liberation Sans',sans-serif;-webkit-text-stroke:1.09px #6b6d85">L</div><div id="vL03" class="t" style="left:3251.40px;top:1097.93px;font-size:24.3px;color:#6b6d85;font-weight:normal;font-family:'Liberation Sans',sans-serif;-webkit-text-stroke:1.09px #6b6d85">0</div><div class="card" style="left:504px;top:1206px"></div><div id="nm4" class="t" style="left:537.70px;top:1243.62px;font-size:27.2px;color:#0b0b0d;font-weight:normal;font-family:'Liberation Sans',sans-serif;-webkit-text-stroke:0.38px #0b0b0d;letter-spacing:-0.382px">apacheds-core-consta...</div><svg class="abs" style="left:846px;top:1242.7px" width="32" height="27" viewBox="0 0 32 27"><path d="M16,0 L32,7.6 L16,15.1 L0,7.6 Z M0,12.2 L2.6,10.6 L16,16.6 L29.4,10.6 L32,12.2 L16,20.6 Z M0,18.0 L2.6,16.4 L16,22.2 L29.4,16.4 L32,18.0 L16,26.4 Z" fill="#3373d0"/></svg><div id="ver4" class="t" style="left:536.70px;top:1301.28px;font-size:24.8px;color:#4f5162;font-weight:normal;font-family:'Liberation Sans',sans-serif;letter-spacing:-0.950px">1.5.5</div><div class="abs" style="left:918px;top:1267.1px;width:133.7px;height:39.6px;background:#fdf6e4;border-radius:8px"></div><div id="out4" class="t" style="left:931.00px;top:1275.74px;font-size:21.3px;color:#d99e32;font-weight:bold;font-family:'Liberation Sans',sans-serif;letter-spacing:-1.171px">OUTDATED</div><div id="lic4" class="t" style="left:1299.90px;top:1272.35px;font-size:25.5px;color:#0b0b0d;font-weight:normal;font-family:'Liberation Sans',sans-serif;letter-spacing:-0.133px">Apache-2.0</div><div id="pm4" class="t" style="left:1678.30px;top:1272.49px;font-size:25.5px;color:#0b0b0d;font-weight:normal;font-family:'Liberation Sans',sans-serif;letter-spacing:-0.350px">maven</div><div class="purl" style="left:2060px;top:1264.7px"></div><div id="purl4" class="t" style="left:2066.00px;top:1276.06px;font-size:24.5px;color:#0b0b0d;font-weight:normal;font-family:'Liberation Mono',monospace;letter-spacing:-0.250px">pkg:maven/org.apache.directory.s…</div><div class="abs" style="left:2972px;top:1268px;width:6px;height:35.7px;background:#dc4a3a"></div><div id="vC4" class="t" style="left:2994.30px;top:1273.23px;font-size:24.3px;color:#a2281d;font-weight:normal;font-family:'Liberation Sans',sans-serif;-webkit-text-stroke:1.09px #a2281d">C</div><div id="vC04" class="t" style="left:3019.30px;top:1273.23px;font-size:24.3px;color:#a2281d;font-weight:normal;font-family:'Liberation Sans',sans-serif;-webkit-text-stroke:1.09px #a2281d">0</div><div class="abs" style="left:3050px;top:1268px;width:6px;height:35.7px;background:#ec5f2c"></div><div id="vH4" class="t" style="left:3072.10px;top:1273.23px;font-size:24.3px;color:#e8602c;font-weight:normal;font-family:'Liberation Sans',sans-serif;-webkit-text-stroke:1.09px #e8602c">H</div><div id="vH04" class="t" style="left:3096.00px;top:1273.93px;font-size:24.3px;color:#e8602c;font-weight:normal;font-family:'Liberation Sans',sans-serif;-webkit-text-stroke:1.09px #e8602c">0</div><div class="abs" style="left:3127.1px;top:1268px;width:6px;height:35.7px;background:#daa033"></div><div id="vM4" class="t" style="left:3150.20px;top:1274.63px;font-size:24.3px;color:#d9a032;font-weight:normal;font-family:'Liberation Sans',sans-serif;-webkit-text-stroke:1.09px #d9a032">M</div><div id="vM04" class="t" style="left:3178.00px;top:1274.63px;font-size:24.3px;color:#d9a032;font-weight:normal;font-family:'Liberation Sans',sans-serif;-webkit-text-stroke:1.09px #d9a032">0</div><div class="abs" style="left:3209.1px;top:1268px;width:6px;height:35.7px;background:#6b6d85"></div><div id="vL4" class="t" style="left:3230.80px;top:1273.23px;font-size:24.3px;color:#6b6d85;font-weight:normal;font-family:'Liberation Sans',sans-serif;-webkit-text-stroke:1.09px #6b6d85">L</div><div id="vL04" class="t" style="left:3251.40px;top:1273.93px;font-size:24.3px;color:#6b6d85;font-weight:normal;font-family:'Liberation Sans',sans-serif;-webkit-text-stroke:1.09px #6b6d85">0</div><div class="card" style="left:504px;top:1382px"></div><div id="nm5" class="t" style="left:537.70px;top:1419.62px;font-size:27.2px;color:#0b0b0d;font-weight:normal;font-family:'Liberation Sans',sans-serif;-webkit-text-stroke:0.38px #0b0b0d;letter-spacing:-0.300px">apacheds-core-entry</div><svg class="abs" style="left:799.8px;top:1418.7px" width="32" height="27" viewBox="0 0 32 27"><path d="M16,0 L32,7.6 L16,15.1 L0,7.6 Z M0,12.2 L2.6,10.6 L16,16.6 L29.4,10.6 L32,12.2 L16,20.6 Z M0,18.0 L2.6,16.4 L16,22.2 L29.4,16.4 L32,18.0 L16,26.4 Z" fill="#3373d0"/></svg><div id="ver5" class="t" style="left:536.70px;top:1477.28px;font-size:24.8px;color:#4f5162;font-weight:normal;font-family:'Liberation Sans',sans-serif;letter-spacing:-0.950px">1.5.5</div><div class="abs" style="left:918px;top:1443.1px;width:133.7px;height:39.6px;background:#fdf6e4;border-radius:8px"></div><div id="out5" class="t" style="left:931.00px;top:1451.74px;font-size:21.3px;color:#d99e32;font-weight:bold;font-family:'Liberation Sans',sans-serif;letter-spacing:-1.171px">OUTDATED</div><div id="lic5" class="t" style="left:1299.90px;top:1448.35px;font-size:25.5px;color:#0b0b0d;font-weight:normal;font-family:'Liberation Sans',sans-serif;letter-spacing:-0.133px">Apache-2.0</div><div id="pm5" class="t" style="left:1678.30px;top:1448.49px;font-size:25.5px;color:#0b0b0d;font-weight:normal;font-family:'Liberation Sans',sans-serif;letter-spacing:-0.350px">maven</div><div class="purl" style="left:2060px;top:1440.7px"></div><div id="purl5" class="t" style="left:2066.00px;top:1452.06px;font-size:24.5px;color:#0b0b0d;font-weight:normal;font-family:'Liberation Mono',monospace;letter-spacing:-0.250px">pkg:maven/org.apache.directory.s…</div><div class="abs" style="left:2972px;top:1444px;width:6px;height:35.7px;background:#dc4a3a"></div><div id="vC5" class="t" style="left:2994.30px;top:1449.23px;font-size:24.3px;color:#a2281d;font-weight:normal;font-family:'Liberation Sans',sans-serif;-webkit-text-stroke:1.09px #a2281d">C</div><div id="vC05" class="t" style="left:3019.30px;top:1449.23px;font-size:24.3px;color:#a2281d;font-weight:normal;font-family:'Liberation Sans',sans-serif;-webkit-text-stroke:1.09px #a2281d">0</div><div class="abs" style="left:3050px;top:1444px;width:6px;height:35.7px;background:#ec5f2c"></div><div id="vH5" class="t" style="left:3072.10px;top:1449.23px;font-size:24.3px;color:#e8602c;font-weight:normal;font-family:'Liberation Sans',sans-serif;-webkit-text-stroke:1.09px #e8602c">H</div><div id="vH05" class="t" style="left:3096.00px;top:1449.93px;font-size:24.3px;color:#e8602c;font-weight:normal;font-family:'Liberation Sans',sans-serif;-webkit-text-stroke:1.09px #e8602c">0</div><div class="abs" style="left:3127.1px;top:1444px;width:6px;height:35.7px;background:#daa033"></div><div id="vM5" class="t" style="left:3150.20px;top:1450.63px;font-size:24.3px;color:#d9a032;font-weight:normal;font-family:'Liberation Sans',sans-serif;-webkit-text-stroke:1.09px #d9a032">M</div><div id="vM05" class="t" style="left:3178.00px;top:1450.63px;font-size:24.3px;color:#d9a032;font-weight:normal;font-family:'Liberation Sans',sans-serif;-webkit-text-stroke:1.09px #d9a032">0</div><div class="abs" style="left:3209.1px;top:1444px;width:6px;height:35.7px;background:#6b6d85"></div><div id="vL5" class="t" style="left:3230.80px;top:1449.23px;font-size:24.3px;color:#6b6d85;font-weight:normal;font-family:'Liberation Sans',sans-serif;-webkit-text-stroke:1.09px #6b6d85">L</div><div id="vL05" class="t" style="left:3251.40px;top:1449.93px;font-size:24.3px;color:#6b6d85;font-weight:normal;font-family:'Liberation Sans',sans-serif;-webkit-text-stroke:1.09px #6b6d85">0</div><div class="card" style="left:504px;top:1558px"></div><div id="nm6" class="t" style="left:537.70px;top:1595.62px;font-size:27.2px;color:#0b0b0d;font-weight:normal;font-family:'Liberation Sans',sans-serif;-webkit-text-stroke:0.38px #0b0b0d;letter-spacing:-0.224px">apacheds-core-jndi</div><svg class="abs" style="left:781px;top:1594.7px" width="32" height="27" viewBox="0 0 32 27"><path d="M16,0 L32,7.6 L16,15.1 L0,7.6 Z M0,12.2 L2.6,10.6 L16,16.6 L29.4,10.6 L32,12.2 L16,20.6 Z M0,18.0 L2.6,16.4 L16,22.2 L29.4,16.4 L32,18.0 L16,26.4 Z" fill="#3373d0"/></svg><div id="ver6" class="t" style="left:536.70px;top:1653.28px;font-size:24.8px;color:#4f5162;font-weight:normal;font-family:'Liberation Sans',sans-serif;letter-spacing:-0.950px">1.5.5</div><div class="abs" style="left:918px;top:1619.1px;width:133.7px;height:39.6px;background:#fdf6e4;border-radius:8px"></div><div id="out6" class="t" style="left:931.00px;top:1627.74px;font-size:21.3px;color:#d99e32;font-weight:bold;font-family:'Liberation Sans',sans-serif;letter-spacing:-1.171px">OUTDATED</div><div id="lic6" class="t" style="left:1299.90px;top:1624.35px;font-size:25.5px;color:#0b0b0d;font-weight:normal;font-family:'Liberation Sans',sans-serif;letter-spacing:-0.133px">Apache-2.0</div><div id="pm6" class="t" style="left:1678.30px;top:1624.49px;font-size:25.5px;color:#0b0b0d;font-weight:normal;font-family:'Liberation Sans',sans-serif;letter-spacing:-0.350px">maven</div><div class="purl" style="left:2060px;top:1616.7px"></div><div id="purl6" class="t" style="left:2066.00px;top:1628.06px;font-size:24.5px;color:#0b0b0d;font-weight:normal;font-family:'Liberation Mono',monospace;letter-spacing:-0.250px">pkg:maven/org.apache.directory.s…</div><div class="abs" style="left:2972px;top:1620px;width:6px;height:35.7px;background:#dc4a3a"></div><div id="vC6" class="t" style="left:2994.30px;top:1625.23px;font-size:24.3px;color:#a2281d;font-weight:normal;font-family:'Liberation Sans',sans-serif;-webkit-text-stroke:1.09px #a2281d">C</div><div id="vC06" class="t" style="left:3019.30px;top:1625.23px;font-size:24.3px;color:#a2281d;font-weight:normal;font-family:'Liberation Sans',sans-serif;-webkit-text-stroke:1.09px #a2281d">0</div><div class="abs" style="left:3050px;top:1620px;width:6px;height:35.7px;background:#ec5f2c"></div><div id="vH6" class="t" style="left:3072.10px;top:1625.23px;font-size:24.3px;color:#e8602c;font-weight:normal;font-family:'Liberation Sans',sans-serif;-webkit-text-stroke:1.09px #e8602c">H</div><div id="vH06" class="t" style="left:3096.00px;top:1625.93px;font-size:24.3px;color:#e8602c;font-weight:normal;font-family:'Liberation Sans',sans-serif;-webkit-text-stroke:1.09px #e8602c">0</div><div class="abs" style="left:3127.1px;top:1620px;width:6px;height:35.7px;background:#daa033"></div><div id="vM6" class="t" style="left:3150.20px;top:1626.63px;font-size:24.3px;color:#d9a032;font-weight:normal;font-family:'Liberation Sans',sans-serif;-webkit-text-stroke:1.09px #d9a032">M</div><div id="vM06" class="t" style="left:3178.00px;top:1626.63px;font-size:24.3px;color:#d9a032;font-weight:normal;font-family:'Liberation Sans',sans-serif;-webkit-text-stroke:1.09px #d9a032">0</div><div class="abs" style="left:3209.1px;top:1620px;width:6px;height:35.7px;background:#6b6d85"></div><div id="vL6" class="t" style="left:3230.80px;top:1625.23px;font-size:24.3px;color:#6b6d85;font-weight:normal;font-family:'Liberation Sans',sans-serif;-webkit-text-stroke:1.09px #6b6d85">L</div><div id="vL06" class="t" style="left:3251.40px;top:1625.93px;font-size:24.3px;color:#6b6d85;font-weight:normal;font-family:'Liberation Sans',sans-serif;-webkit-text-stroke:1.09px #6b6d85">0</div><div class="card" style="left:504px;top:1734px"></div><div id="nm7" class="t" style="left:537.70px;top:1771.62px;font-size:27.2px;color:#0b0b0d;font-weight:normal;font-family:'Liberation Sans',sans-serif;-webkit-text-stroke:0.38px #0b0b0d;letter-spacing:-0.389px">apacheds-core-shared</div><svg class="abs" style="left:818px;top:1770.7px" width="32" height="27" viewBox="0 0 32 27"><path d="M16,0 L32,7.6 L16,15.1 L0,7.6 Z M0,12.2 L2.6,10.6 L16,16.6 L29.4,10.6 L32,12.2 L16,20.6 Z M0,18.0 L2.6,16.4 L16,22.2 L29.4,16.4 L32,18.0 L16,26.4 Z" fill="#3373d0"/></svg><div id="ver7" class="t" style="left:536.70px;top:1829.28px;font-size:24.8px;color:#4f5162;font-weight:normal;font-family:'Liberation Sans',sans-serif;letter-spacing:-0.950px">1.5.5</div><div class="abs" style="left:918px;top:1795.1px;width:133.7px;height:39.6px;background:#fdf6e4;border-radius:8px"></div><div id="out7" class="t" style="left:931.00px;top:1803.74px;font-size:21.3px;color:#d99e32;font-weight:bold;font-family:'Liberation Sans',sans-serif;letter-spacing:-1.171px">OUTDATED</div><div id="lic7" class="t" style="left:1299.90px;top:1800.35px;font-size:25.5px;color:#0b0b0d;font-weight:normal;font-family:'Liberation Sans',sans-serif;letter-spacing:-0.133px">Apache-2.0</div><div id="pm7" class="t" style="left:1678.30px;top:1800.49px;font-size:25.5px;color:#0b0b0d;font-weight:normal;font-family:'Liberation Sans',sans-serif;letter-spacing:-0.350px">maven</div><div class="purl" style="left:2060px;top:1792.7px"></div><div id="purl7" class="t" style="left:2066.00px;top:1804.06px;font-size:24.5px;color:#0b0b0d;font-weight:normal;font-family:'Liberation Mono',monospace;letter-spacing:-0.250px">pkg:maven/org.apache.directory.s…</div><div class="abs" style="left:2972px;top:1796px;width:6px;height:35.7px;background:#dc4a3a"></div><div id="vC7" class="t" style="left:2994.30px;top:1801.23px;font-size:24.3px;color:#a2281d;font-weight:normal;font-family:'Liberation Sans',sans-serif;-webkit-text-stroke:1.09px #a2281d">C</div><div id="vC07" class="t" style="left:3019.30px;top:1801.23px;font-size:24.3px;color:#a2281d;font-weight:normal;font-family:'Liberation Sans',sans-serif;-webkit-text-stroke:1.09px #a2281d">0</div><div class="abs" style="left:3050px;top:1796px;width:6px;height:35.7px;background:#ec5f2c"></div><div id="vH7" class="t" style="left:3072.10px;top:1801.23px;font-size:24.3px;color:#e8602c;font-weight:normal;font-family:'Liberation Sans',sans-serif;-webkit-text-stroke:1.09px #e8602c">H</div><div id="vH07" class="t" style="left:3096.00px;top:1801.93px;font-size:24.3px;color:#e8602c;font-weight:normal;font-family:'Liberation Sans',sans-serif;-webkit-text-stroke:1.09px #e8602c">0</div><div class="abs" style="left:3127.1px;top:1796px;width:6px;height:35.7px;background:#daa033"></div><div id="vM7" class="t" style="left:3150.20px;top:1802.63px;font-size:24.3px;color:#d9a032;font-weight:normal;font-family:'Liberation Sans',sans-serif;-webkit-text-stroke:1.09px #d9a032">M</div><div id="vM07" class="t" style="left:3178.00px;top:1802.63px;font-size:24.3px;color:#d9a032;font-weight:normal;font-family:'Liberation Sans',sans-serif;-webkit-text-stroke:1.09px #d9a032">0</div><div class="abs" style="left:3209.1px;top:1796px;width:6px;height:35.7px;background:#6b6d85"></div><div id="vL7" class="t" style="left:3230.80px;top:1801.23px;font-size:24.3px;color:#6b6d85;font-weight:normal;font-family:'Liberation Sans',sans-serif;-webkit-text-stroke:1.09px #6b6d85">L</div><div id="vL07" class="t" style="left:3251.40px;top:1801.93px;font-size:24.3px;color:#6b6d85;font-weight:normal;font-family:'Liberation Sans',sans-serif;-webkit-text-stroke:1.09px #6b6d85">0</div><div class="card" style="left:504px;top:1910px"></div><div id="nm8" class="t" style="left:537.70px;top:1947.62px;font-size:27.2px;color:#0b0b0d;font-weight:normal;font-family:'Liberation Sans',sans-serif;-webkit-text-stroke:0.38px #0b0b0d;letter-spacing:-0.287px">apacheds-interceptor-...</div><svg class="abs" style="left:846px;top:1946.7px" width="32" height="27" viewBox="0 0 32 27"><path d="M16,0 L32,7.6 L16,15.1 L0,7.6 Z M0,12.2 L2.6,10.6 L16,16.6 L29.4,10.6 L32,12.2 L16,20.6 Z M0,18.0 L2.6,16.4 L16,22.2 L29.4,16.4 L32,18.0 L16,26.4 Z" fill="#3373d0"/></svg><div id="ver8" class="t" style="left:536.70px;top:2005.28px;font-size:24.8px;color:#4f5162;font-weight:normal;font-family:'Liberation Sans',sans-serif;letter-spacing:-0.950px">1.5.5</div><div class="abs" style="left:918px;top:1971.1px;width:133.7px;height:39.6px;background:#fdf6e4;border-radius:8px"></div><div id="out8" class="t" style="left:931.00px;top:1979.74px;font-size:21.3px;color:#d99e32;font-weight:bold;font-family:'Liberation Sans',sans-serif;letter-spacing:-1.171px">OUTDATED</div><div id="lic8" class="t" style="left:1299.90px;top:1976.35px;font-size:25.5px;color:#0b0b0d;font-weight:normal;font-family:'Liberation Sans',sans-serif;letter-spacing:-0.133px">Apache-2.0</div><div id="pm8" class="t" style="left:1678.30px;top:1976.49px;font-size:25.5px;color:#0b0b0d;font-weight:normal;font-family:'Liberation Sans',sans-serif;letter-spacing:-0.350px">maven</div><div class="purl" style="left:2060px;top:1968.7px"></div><div id="purl8" class="t" style="left:2066.00px;top:1980.06px;font-size:24.5px;color:#0b0b0d;font-weight:normal;font-family:'Liberation Mono',monospace;letter-spacing:-0.250px">pkg:maven/org.apache.directory.s…</div><div class="abs" style="left:2972px;top:1972px;width:6px;height:35.7px;background:#dc4a3a"></div><div id="vC8" class="t" style="left:2994.30px;top:1977.23px;font-size:24.3px;color:#a2281d;font-weight:normal;font-family:'Liberation Sans',sans-serif;-webkit-text-stroke:1.09px #a2281d">C</div><div id="vC08" class="t" style="left:3019.30px;top:1977.23px;font-size:24.3px;color:#a2281d;font-weight:normal;font-family:'Liberation Sans',sans-serif;-webkit-text-stroke:1.09px #a2281d">0</div><div class="abs" style="left:3050px;top:1972px;width:6px;height:35.7px;background:#ec5f2c"></div><div id="vH8" class="t" style="left:3072.10px;top:1977.23px;font-size:24.3px;color:#e8602c;font-weight:normal;font-family:'Liberation Sans',sans-serif;-webkit-text-stroke:1.09px #e8602c">H</div><div id="vH08" class="t" style="left:3096.00px;top:1977.93px;font-size:24.3px;color:#e8602c;font-weight:normal;font-family:'Liberation Sans',sans-serif;-webkit-text-stroke:1.09px #e8602c">0</div><div class="abs" style="left:3127.1px;top:1972px;width:6px;height:35.7px;background:#daa033"></div><div id="vM8" class="t" style="left:3150.20px;top:1978.63px;font-size:24.3px;color:#d9a032;font-weight:normal;font-family:'Liberation Sans',sans-serif;-webkit-text-stroke:1.09px #d9a032">M</div><div id="vM08" class="t" style="left:3178.00px;top:1978.63px;font-size:24.3px;color:#d9a032;font-weight:normal;font-family:'Liberation Sans',sans-serif;-webkit-text-stroke:1.09px #d9a032">0</div><div class="abs" style="left:3209.1px;top:1972px;width:6px;height:35.7px;background:#6b6d85"></div><div id="vL8" class="t" style="left:3230.80px;top:1977.23px;font-size:24.3px;color:#6b6d85;font-weight:normal;font-family:'Liberation Sans',sans-serif;-webkit-text-stroke:1.09px #6b6d85">L</div><div id="vL08" class="t" style="left:3251.40px;top:1977.93px;font-size:24.3px;color:#6b6d85;font-weight:normal;font-family:'Liberation Sans',sans-serif;-webkit-text-stroke:1.09px #6b6d85">0</div><div class="abs" style="left:464px;top:0;width:18px;height:1984px;background:linear-gradient(to right,rgba(30,32,50,.06),rgba(30,32,50,0))"></div><div class="abs" style="left:462px;top:0;width:2px;height:1984px;background:#3a3e4d"></div><div class="abs" style="left:498px;top:671px;width:2906px;height:173px;border:10px solid #e8402a"></div><div class="abs" style="left:3394px;top:0;width:32px;height:1984px;background:linear-gradient(to right,rgba(30,40,70,0),rgba(30,40,70,.07))"></div><div class="abs" style="left:3412px;top:982px;width:20px;height:20px;border-radius:50%;background:#ec7a4f"></div><div class="abs" style="left:3134px;top:1824px;width:196px;height:64px;border-radius:32px;padding:3px;background:linear-gradient(100deg,#e07cc4 0%,#7b3fd6 45%,#4e6fe0 75%,#5cc6e6 100%)"><div style="width:100%;height:100%;border-radius:29px;background:#fff"></div></div><svg class="abs" style="left:3156px;top:1834px" width="44" height="44" viewBox="0 0 44 44"><defs><linearGradient id="bot" x1="0" y1="0" x2="0" y2="1"><stop offset="0" stop-color="#f2c6f6"/><stop offset="1" stop-color="#a57ce8"/></linearGradient></defs><circle cx="22" cy="5" r="2" fill="#d9a6ee"/><path d="M22,5 L22,10" stroke="#d9a6ee" stroke-width="1.5"/><path d="M5,30 C3,27 5,24 6,22 L38,22 C39,24 41,27 39,30 Z" fill="#c79cf0"/><circle cx="22" cy="24" r="17" fill="url(#bot)"/><circle cx="14.5" cy="21" r="4.5" fill="#5a3fc0"/><circle cx="29" cy="21" r="4.5" fill="#5a3fc0"/><circle cx="14.5" cy="21" r="2" fill="#f2d6f8"/><circle cx="29" cy="21" r="2" fill="#f2d6f8"/><path d="M19.5,25.5 L24.5,25.5 L22,28 Z" fill="#5a3fc0"/></svg><svg class="abs" style="left:3204px;top:1838px" width="100" height="36" viewBox="0 0 100 36"><defs><linearGradient id="ai" x1="0" y1="0" x2="1" y2="0"><stop offset="0" stop-color="#cc6fc8"/><stop offset=".5" stop-color="#6a3fd5"/><stop offset="1" stop-color="#5b9ae0"/></linearGradient></defs><text x="2" y="28.5" font-family="Liberation Sans" font-weight="bold" font-size="29" fill="url(#ai)" textLength="90">Ask AI</text></svg><div class="abs" style="left:3426px;top:0;width:30px;height:1984px;background:#2c2c2c"></div><div class="abs" style="left:3434px;top:6px;width:16px;height:926px;border-radius:8px;background:#6b6b6b"></div><div class="abs" style="left:3454px;top:0;width:2px;height:1984px;background:#4a4a4a"></div><svg class="abs" style="left:438px;top:1770px" width="26" height="116" viewBox="0 0 26 116"><path d="M26,2 L2,32 L2,84 L26,114 Z" fill="#aeb0c4"/><path d="M6,57 L20,50 L20,64 Z" fill="#0e1b33"/></svg></body></html>
